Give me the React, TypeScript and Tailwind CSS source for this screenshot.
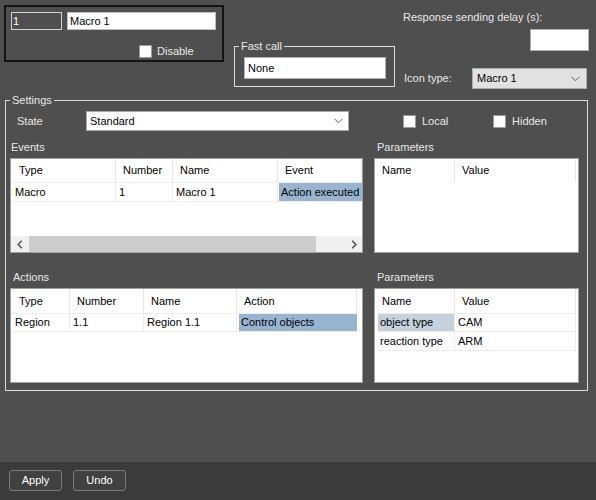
import React from "react";

const Chevron = () => (
  <svg width="9" height="6" viewBox="0 0 9 6">
    <path d="M0.5 0.8 L4.5 4.8 L8.5 0.8" fill="none" stroke="#5a5a5a" strokeWidth="1" />
  </svg>
);

const Check = () => <div className="w-[13px] h-[13px] bg-white border border-[#9a9a9a] shrink-0" />;

const ArrowL = () => (
  <svg width="6" height="9" viewBox="0 0 6 9">
    <path d="M4.8 0.8 L1.2 4.5 L4.8 8.2" fill="none" stroke="#555" strokeWidth="1.6" />
  </svg>
);
const ArrowR = () => (
  <svg width="6" height="9" viewBox="0 0 6 9">
    <path d="M1.2 0.8 L4.8 4.5 L1.2 8.2" fill="none" stroke="#555" strokeWidth="1.6" />
  </svg>
);

export default function App() {
  return (
    <div className="w-[596px] h-[500px] bg-[#4f4f4f] flex flex-col font-['Liberation_Sans',Arial,sans-serif] text-[11px] text-[#e8e8e8] overflow-hidden">
      <div className="h-[462px]">
        {/* top row */}
        <div className="h-[93px] flex items-start">
          <div className="mt-[5px] ml-[4px] w-[220px] h-[57px] border-2 border-[#141414] flex flex-col shrink-0">
            <div className="flex mt-[5px] ml-[5px] gap-[5px]">
              <div className="w-[51px] h-[18px] border border-[#d4d4d4] flex items-center pl-[1px] text-white">1</div>
              <div className="w-[149px] h-[18px] bg-white border border-[#bdbdbd] flex items-center pl-[2px] text-black">Macro 1</div>
            </div>
            <div className="flex items-center mt-[13px] ml-[133px] gap-[5px]">
              <Check />
              <span>Disable</span>
            </div>
          </div>

          <fieldset className="ml-[10px] mt-[39px] w-[161px] h-[48px] border border-[#dcdcdc] shrink-0">
            <legend className="ml-[4px] px-[2px] leading-[14px]">Fast call</legend>
            <div className="mt-[4px] ml-[9px] w-[142px] h-[22px] bg-white border border-[#b0b0b0] flex items-center pl-[3px] text-black">
              None
            </div>
          </fieldset>

          <div className="ml-[8px] w-[186px] flex flex-col shrink-0">
            <div className="mt-[10px] leading-[14px]">Response sending delay (s):</div>
            <div className="mt-[5px] self-end w-[59px] h-[22px] bg-white border border-[#b0b0b0]" />
            <div className="mt-[17px] h-[21px] flex items-center">
              <span className="pl-[1px]">Icon type:</span>
              <div className="ml-auto mr-[2px] w-[115px] h-[21px] bg-[#e1e1e1] border border-[#adadad] flex items-center justify-between pl-[4px] pr-[6px] text-black">
                <span>Macro 1</span>
                <Chevron />
              </div>
            </div>
          </div>
        </div>

        {/* settings */}
        <fieldset className="ml-[5px] w-[583px] h-[298px] border border-[#dcdcdc]">
          <legend className="ml-[4px] px-[2px] leading-[14px]">Settings</legend>
          <div className="mt-[4px] h-[20px] flex items-center">
            <div className="w-[80px] pl-[11px] shrink-0">State</div>
            <div className="w-[263px] h-[20px] bg-white border border-[#a9a9a9] flex items-center justify-between pl-[3px] pr-[5px] text-black shrink-0">
              <span>Standard</span>
              <Chevron />
            </div>
            <div className="ml-[54px] w-[90px] flex items-center gap-[6px]">
              <Check />
              <span>Local</span>
            </div>
            <div className="flex items-center gap-[6px]">
              <Check />
              <span>Hidden</span>
            </div>
          </div>

          {/* events row */}
          <div className="ml-[4px] mt-[9px] flex gap-[11px]">
            <div className="w-[353px] flex flex-col">
              <div className="leading-[14px] pl-[1px]">Events</div>
              <div className="mt-[4px] w-[353px] h-[95px] bg-white border border-[#a0a0a0] flex flex-col text-black">
                <div className="grid grid-cols-[105px_57px_105px_84px] h-[23px]">
                  <div className="flex items-center pl-[8px] border-r border-[#e5e5e5]">Type</div>
                  <div className="flex items-center pl-[7px] border-r border-[#e5e5e5]">Number</div>
                  <div className="flex items-center pl-[7px] border-r border-[#e5e5e5]">Name</div>
                  <div className="flex items-center pl-[7px] border-r border-[#e5e5e5]">Event</div>
                </div>
                <div className="grid grid-cols-[105px_57px_105px_84px] h-[20px] border-t border-b border-[#ededed]">
                  <div className="flex items-center pl-[4px] border-r border-[#ededed]">Macro</div>
                  <div className="flex items-center pl-[3px] border-r border-[#ededed]">1</div>
                  <div className="flex items-center pl-[3px] border-r border-[#ededed]">Macro 1</div>
                  <div className="flex items-center pl-[1px]">
                    <div className="h-full w-full bg-[#99b4d1] flex items-center pl-[2px] whitespace-nowrap">Action executed</div>
                  </div>
                </div>
                <div className="flex-1" />
                <div className="h-[16px] flex bg-[#f0f0f0]">
                  <div className="w-[18px] flex items-center justify-center"><ArrowL /></div>
                  <div className="w-[287px] bg-[#cdcdcd]" />
                  <div className="flex-1" />
                  <div className="w-[17px] flex items-center justify-center"><ArrowR /></div>
                </div>
              </div>
            </div>
            <div className="w-[205px] flex flex-col">
              <div className="leading-[14px] pl-[3px]">Parameters</div>
              <div className="mt-[4px] w-[205px] h-[95px] bg-white border border-[#a0a0a0] text-black">
                <div className="grid grid-cols-[80px_121px] h-[23px]">
                  <div className="flex items-center pl-[7px] border-r border-[#e5e5e5]">Name</div>
                  <div className="flex items-center pl-[7px] border-r border-[#e5e5e5]">Value</div>
                </div>
              </div>
            </div>
          </div>

          {/* actions row */}
          <div className="ml-[4px] mt-[17px] flex gap-[11px]">
            <div className="w-[353px] flex flex-col">
              <div className="leading-[14px] pl-[3px]">Actions</div>
              <div className="mt-[4px] w-[353px] h-[95px] bg-white border border-[#a0a0a0] flex flex-col text-black">
                <div className="grid grid-cols-[59px_74px_93px_120px] h-[24px]">
                  <div className="flex items-center pl-[8px] border-r border-[#e5e5e5]">Type</div>
                  <div className="flex items-center pl-[7px] border-r border-[#e5e5e5]">Number</div>
                  <div className="flex items-center pl-[7px] border-r border-[#e5e5e5]">Name</div>
                  <div className="flex items-center pl-[7px] border-r border-[#e5e5e5]">Action</div>
                </div>
                <div className="grid grid-cols-[59px_74px_93px_120px] h-[19px] border-t border-b border-[#ededed] w-[346px]">
                  <div className="flex items-center pl-[4px] border-r border-[#ededed]">Region</div>
                  <div className="flex items-center pl-[3px] border-r border-[#ededed]">1.1</div>
                  <div className="flex items-center pl-[3px] border-r border-[#ededed]">Region 1.1</div>
                  <div className="flex items-center pl-[2px]">
                    <div className="h-full w-full bg-[#99b4d1] flex items-center pl-[2px] whitespace-nowrap">Control objects</div>
                  </div>
                </div>
              </div>
            </div>
            <div className="w-[205px] flex flex-col">
              <div className="leading-[14px] pl-[3px]">Parameters</div>
              <div className="mt-[4px] w-[205px] h-[95px] bg-white border border-[#a0a0a0] text-black flex flex-col">
                <div className="grid grid-cols-[80px_121px] h-[24px]">
                  <div className="flex items-center pl-[7px] border-r border-[#e5e5e5]">Name</div>
                  <div className="flex items-center pl-[7px] border-r border-[#e5e5e5]">Value</div>
                </div>
                <div className="ml-[3px] w-[198px] grid grid-cols-[77px_121px] h-[19px] border-t border-b border-[#ececec]">
                  <div className="bg-[#c5d1dd] flex items-center pl-[2px] border-r border-[#ececec]">object type</div>
                  <div className="flex items-center pl-[3px] border-r border-[#ececec]">CAM</div>
                </div>
                <div className="ml-[3px] w-[198px] grid grid-cols-[77px_121px] h-[19px] border-b border-[#ececec]">
                  <div className="flex items-center pl-[2px] border-r border-[#ececec]">reaction type</div>
                  <div className="flex items-center pl-[3px] border-r border-[#ececec]">ARM</div>
                </div>
              </div>
            </div>
          </div>
        </fieldset>
      </div>

      <div className="h-[38px] bg-[#3c3b3c] flex items-start pt-[8px] pl-[9px] gap-[11px]">
        <div className="w-[53px] h-[21px] border border-[#7a7a7a] rounded-[3px] bg-[#424142] text-white flex items-center justify-center">Apply</div>
        <div className="w-[53px] h-[21px] border border-[#7a7a7a] rounded-[3px] bg-[#424142] text-white flex items-center justify-center">Undo</div>
      </div>
    </div>
  );
}
